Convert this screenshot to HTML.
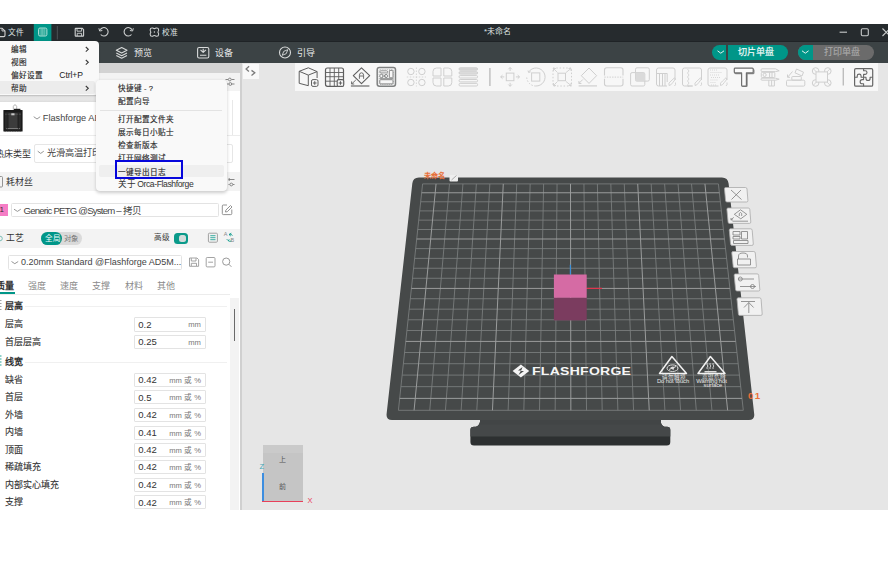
<!DOCTYPE html>
<html lang="zh-CN"><head><meta charset="utf-8">
<style>
*{margin:0;padding:0;box-sizing:border-box}
html,body{width:888px;height:575px;overflow:hidden;background:#fff}
body{position:relative;font-family:"Liberation Sans",sans-serif;color:#333}
.a{position:absolute}
.t{position:absolute;white-space:nowrap;line-height:1}
svg{position:absolute;overflow:visible}
</style></head><body>

<!-- title bar -->
<div class="a" style="left:0;top:24px;width:888px;height:17px;background:#262b2e"></div>
<!-- tab bar -->
<div class="a" style="left:0;top:41px;width:888px;height:22px;background:#3c4345"></div>
<div class="a" style="left:0;top:40.6px;width:888px;height:1.4px;background:#1f2326"></div>
<!-- left panel -->
<div class="a" style="left:0;top:63px;width:240px;height:447px;background:#fff"></div>
<div class="a" style="left:239.5px;top:63px;width:2.5px;height:447px;background:#d0d0d0"></div>
<!-- canvas -->
<div class="a" style="left:242px;top:63px;width:646px;height:447px;background:#e6e6e6"></div>
<!-- toolbar -->
<div class="a" style="left:295px;top:63px;width:583px;height:28px;background:#f7f7f7"></div>
<div class="a" style="left:242.8px;top:64px;width:16px;height:15.3px;background:#f9f9f9"></div>
<svg width="20" height="20" style="left:240px;top:60px" viewBox="0 0 20 20"><path d="M9.1 6.3 L6.1 8.9 L8.9 11.5 M11.5 10.4 L14.8 12.8 L11.5 15.4" fill="none" stroke="#7a7a7a" stroke-width="1.3"/></svg>


<!-- bed -->
<svg width="888" height="575" style="left:0;top:0" viewBox="0 0 888 575">
<path d="M470.4 436 L470.4 430 Q470.4 426.7 474 426.7 L476 426.7 Q480.2 425 480.2 420 L660.5 420 Q660.5 425 664.5 426.7 L667 426.7 Q670.3 426.7 670.3 430 L670.3 442 Q670.3 445.5 666.8 445.5 L474 445.5 Q470.4 445.5 470.4 442 Z" fill="#2d3031"/>
<path d="M470.4 436.4 L470.4 430 Q470.4 426.7 474 426.7 L476 426.7 Q480.2 425 480.2 420 L660.5 420 Q660.5 425 664.5 426.7 L667 426.7 Q670.3 426.7 670.3 430 L670.3 436.4 Z" fill="#454849"/>
<rect x="480" y="419.5" width="181" height="5" fill="#424546"/>
<path d="M418.9 177.6 L721.9 177.6 Q727.9 177.6 728.6 183.6 L754.2 414 Q754.9 420 748.9 420 L392 420 Q386 420 386.6 414 L412.3 183.6 Q412.9 177.6 418.9 177.6 Z" fill="#464949"/>
<path d="M422.60 183.90L398.40 410.30M422.60 183.90L718.40 183.90M449.49 183.90L429.75 410.30M420.69 201.78L720.37 201.78M462.94 183.90L445.43 410.30M419.71 210.90L721.37 210.90M476.38 183.90L461.11 410.30M418.73 220.14L722.39 220.14M489.83 183.90L476.79 410.30M417.73 229.51L723.42 229.51M516.72 183.90L508.14 410.30M415.68 248.61L725.52 248.61M530.16 183.90L523.82 410.30M414.64 258.36L726.59 258.36M543.61 183.90L539.50 410.30M413.58 268.25L727.68 268.25M557.05 183.90L555.17 410.30M412.51 278.27L728.78 278.27M583.95 183.90L586.53 410.30M410.33 298.73L731.03 298.73M597.39 183.90L602.20 410.30M409.21 309.17L732.18 309.17M610.84 183.90L617.88 410.30M408.08 319.77L733.34 319.77M624.28 183.90L633.56 410.30M406.93 330.52L734.53 330.52M651.17 183.90L664.91 410.30M404.58 352.49L736.94 352.49M664.62 183.90L680.59 410.30M403.38 363.71L738.18 363.71M678.06 183.90L696.27 410.30M402.16 375.10L739.43 375.10M691.51 183.90L711.95 410.30M400.93 386.66L740.70 386.66M718.40 183.90L743.30 410.30M398.40 410.30L743.30 410.30" stroke="#7c7f7f" stroke-width="0.85" fill="none"/>
<path d="M436.05 183.90L414.08 410.30M421.65 192.78L719.38 192.78M503.27 183.90L492.46 410.30M416.71 238.99L724.46 238.99M570.50 183.90L570.85 410.30M411.43 288.42L729.90 288.42M637.73 183.90L649.24 410.30M405.76 341.42L735.72 341.42M704.95 183.90L727.62 410.30M399.67 398.39L741.99 398.39" stroke="#9a9c9c" stroke-width="1" fill="none"/>
</svg>


<!-- bed details -->
<div class="t" style="left:423.8px;top:173.3px;font-size:7.1px;color:#e8703a;font-weight:bold">未命名</div>
<svg width="10" height="8" style="left:448.5px;top:173.5px" viewBox="0 0 10 8"><rect x="0.5" y="1" width="8.5" height="6.5" rx="1" fill="#eee"/><path d="M2.5 6 L7.5 1.5" stroke="#999" stroke-width="0.8"/></svg>
<svg width="888" height="575" style="left:0;top:0" viewBox="0 0 888 575">
<!-- logo diamond -->
<path d="M520.9 364.5 L529.2 371 L520.9 377.6 L512.6 371 Z" fill="#f4f4f4"/>
<path d="M522.5 367 L518 370.5 L521 370.5 L518.5 375 L524 371 L521 371 Z" fill="#464949"/>
<!-- warning triangles -->
<path d="M671.9 356.5 L686.5 373.5 L659.5 373.5 Z" fill="none" stroke="#f2f2f2" stroke-width="1.5" stroke-linejoin="round"/>
<ellipse cx="672.5" cy="368.2" rx="5.5" ry="3.3" fill="none" stroke="#e8e8e8" stroke-width="0.9"/>
<path d="M669 369.5 L676 366.5" stroke="#e8e8e8" stroke-width="0.9"/>
<path d="M670 368 Q672 365.5 674.5 367 L673.5 370 Z" fill="#dcdcdc"/>
<path d="M710.4 356.5 L725 373.5 L698 373.5 Z" fill="none" stroke="#f2f2f2" stroke-width="1.5" stroke-linejoin="round"/>
<path d="M707.3 363 q-1 1 0 2 q1 1 0 2 q-1 1 0 2 M710.3 363 q-1 1 0 2 q1 1 0 2 q-1 1 0 2 M713.3 363 q-1 1 0 2 q1 1 0 2 q-1 1 0 2" fill="none" stroke="#e8e8e8" stroke-width="0.8"/>
<rect x="704.5" y="371" width="12" height="1.5" fill="#dcdcdc"/>
<!-- cube -->
<rect x="553.9" y="297.8" width="32.8" height="22.6" fill="#7b3c5f"/>
<rect x="553.9" y="274.5" width="32.8" height="23.3" fill="#d56ba4"/>
<path d="M570.4 264.7 L570.4 274.5" stroke="#3a8fd8" stroke-width="1.2"/>
<path d="M586.7 288.4 L602 288.4" stroke="#e0354d" stroke-width="1.2"/>
</svg>
<div class="t" style="left:532px;top:366px;font-size:10.5px;color:#f6f6f6;font-weight:bold;letter-spacing:0.2px;transform:scaleX(1.335);transform-origin:0 0">FLASHFORGE</div>
<div class="t" style="left:662px;top:375.3px;font-size:5.6px;color:#e6e6e6">请勿触摸</div>
<div class="t" style="left:656.9px;top:379.2px;font-size:5.9px;color:#e6e6e6;letter-spacing:-0.1px">Do not touch</div>
<div class="t" style="left:701.5px;top:375.3px;font-size:5.6px;color:#e6e6e6">高温危险</div>
<div class="t" style="left:696.3px;top:379.2px;font-size:5.9px;color:#e6e6e6;letter-spacing:-0.1px">Warning hot</div>
<div class="t" style="left:703.6px;top:383.3px;font-size:5.9px;color:#e6e6e6;letter-spacing:-0.1px">surface</div>
<div class="t" style="left:748px;top:391px;font-size:9.8px;color:#ee7038;font-weight:bold;letter-spacing:1.4px">01</div>


<!-- plate buttons -->
<svg width="888" height="575" style="left:0;top:0" viewBox="0 0 888 575">
<g fill="#f1f1f1" stroke="#a9a9a9" stroke-width="0.8">
<path d="M725.5 187.5 L745.5 187.5 Q746.8 187.5 747 189 L747.9 200.5 Q748 202 746.5 202 L727 202 Q725.8 202 725.6 200.8 L724.5 189 Q724.4 187.5 725.5 187.5Z"/>
<path d="M727.9 208 L748.3 208 Q749.6 208 749.8 209.5 L750.8 222 Q750.9 223.4 749.4 223.4 L729.5 223.4 Q728.3 223.4 728.1 222.2 L726.9 209.5 Q726.8 208 727.9 208Z"/>
<path d="M730.3 228.8 L750.7 228.8 Q752 228.8 752.2 230.3 L753.3 244 Q753.4 245.4 751.9 245.4 L732 245.4 Q730.8 245.4 730.6 244.2 L729.3 230.3 Q729.2 228.8 730.3 228.8Z"/>
<path d="M732.8 251.5 L753.8 251.5 Q755.1 251.5 755.3 253 L756.4 266.4 Q756.5 267.8 755 267.8 L734.6 267.8 Q733.4 267.8 733.2 266.6 L731.8 253 Q731.7 251.5 732.8 251.5Z"/>
<path d="M735.2 273.9 L757.2 273.9 Q758.5 273.9 758.7 275.4 L759.8 289.6 Q759.9 291 758.4 291 L737 291 Q735.8 291 735.6 289.8 L734.2 275.4 Q734.1 273.9 735.2 273.9Z"/>
<path d="M738.2 297.8 L759.6 297.8 Q760.9 297.8 761.1 299.3 L762.2 314 Q762.3 315.4 760.8 315.4 L739.8 315.4 Q738.6 315.4 738.4 314.2 L737 299.3 Q736.9 297.8 738.2 297.8Z"/>
</g>
<g fill="none" stroke="#7d7d7d" stroke-width="0.8">
<path d="M731 190 L741.5 199.5 M741 190 L731.5 199.5"/>
<path d="M740.5 209.8 L746.8 214.3 L740.8 218.8 L734.3 214.3 Z M739.3 216 v-2.5 q1.2-2 2.4 0 v2.5 M730.8 219.8 l3 -2.4 M731 218 v1.9 h1.9 M732.5 221.2 L748 221.2" />
<path d="M733 231.5 h7 v3.5 h-7z M733 236.5 h7 v2.5 h-7z M741.5 231.5 h6 v7.5 h-6z M733.5 240.5 h14.5 v3 h-14.5z"/>
<path d="M738.5 259 v-3 q0-3 4.5-3 q4.5 0 4.5 3 v1.5 M737.5 259 h13 v6 h-13z"/>
<path d="M738 279 h16 M740 286.5 h16"/>
<circle cx="740.3" cy="279" r="2"/><circle cx="752.5" cy="286.5" r="2"/>
<path d="M741 301.5 h14 M748.8 302.5 v10.5 M744 307.5 l4.8-5 l4.8 5"/>
</g>
</svg>
<!-- gizmo -->
<div class="a" style="left:262.8px;top:444.7px;width:40px;height:57px;background:#c5c5c5"></div>
<div class="a" style="left:262.8px;top:444.7px;width:40px;height:8.5px;background:#cacaca"></div>
<div class="t" style="left:278.5px;top:455.5px;font-size:7px;color:#555">上</div>
<div class="t" style="left:278.5px;top:483px;font-size:7px;color:#555">前</div>
<div class="a" style="left:262px;top:473.2px;width:1.6px;height:29px;background:#3d8ee0"></div>
<div class="a" style="left:262px;top:500.8px;width:41px;height:1.5px;background:#e8405a"></div>
<div class="t" style="left:259.5px;top:462.5px;font-size:7.5px;color:#3fa7b8">Z</div>
<div class="t" style="left:307.5px;top:496.5px;font-size:7.5px;color:#e8405a">X</div>


<!-- toolbar icons -->
<svg width="888" height="575" style="left:0;top:0" viewBox="0 0 888 575">
<g fill="none" stroke="#5e5e5e" stroke-width="1" stroke-linejoin="round">
<path d="M299.2 71.3 L308.3 67.8 L317.1 71.6 L308.3 75.1 Z M299.2 71.3 V83.3 L308.3 85.7 V75.1 M317.1 71.6 V78"/>
<rect x="311.5" y="79.6" width="6.5" height="6.8" rx="1.5"/>
<path d="M314.75 81.2 v3.6 M312.95 83 h3.6"/>
<rect x="325.5" y="68" width="18" height="18.3" rx="2" stroke-width="1.2"/>
<path d="M330 68 V86.3 M334.3 68 V86.3 M338.7 68 V79.5 M325.5 72.5 H343.5 M325.5 76.7 H343.5 M325.5 81.2 H337" stroke-width="0.9"/>
<rect x="337.2" y="79.6" width="6.5" height="6.8" rx="1.5" fill="#f7f7f7" stroke-width="1.1"/>
<path d="M340.45 81.2 v3.6 M338.65 83 h3.6"/>
<path d="M361.5 67.8 L369.7 75.7 L361.5 83.6 L353.3 75.7 Z" stroke-width="1.1"/>
<path d="M359.4 78.8 V75.3 Q359.4 72.8 361.5 72.8 Q363.6 72.8 363.6 75.3 V78.8 M359.4 76 H363.6" stroke-width="0.9"/>
<path d="M355.8 80 L351.8 83.8 M351.6 81.4 V84 H354.2" stroke-width="0.9"/>
<path d="M350.9 86 H369.4" stroke-width="1.1"/>
<rect x="377.2" y="67.6" width="18.3" height="18.7" rx="2.2" stroke="#808282" stroke-width="1.5"/>
<rect x="379.1" y="69.6" width="14.5" height="14.9" rx="1" stroke="#a8aaaa" stroke-width="0.7" stroke-dasharray="1.2 1"/>
<rect x="389.3" y="70.4" width="3.7" height="7.4" rx="0.6" stroke="#7a7c7c" stroke-width="0.9"/>
<rect x="379.8" y="79.7" width="13.2" height="4.2" rx="0.8" stroke="#7a7c7c" stroke-width="0.9"/>
<rect x="379.8" y="70.8" width="7.8" height="2.1" rx="1" stroke="#7a7c7c" stroke-width="0.8"/>
<path d="M379.5 78.6 H393.5" stroke="#8a8c8c" stroke-width="0.9"/>
<circle cx="381.3" cy="76" r="1.6" stroke="#7a7c7c" stroke-width="0.8"/><circle cx="386" cy="76" r="1.6" stroke="#7a7c7c" stroke-width="0.8"/>
<path d="M381.5 73.5 L387.5 78.3 M387.5 73.5 L381.5 78.3" stroke="#8a8c8c" stroke-width="0.7"/>
<path d="M735.6 69.4 H753 Q753.9 69.4 753.9 70.3 V72.8 Q753.9 73.7 753 73.7 H747.1 V85.6 Q747.1 86.5 746.2 86.5 H743.3 Q742.4 86.5 742.4 85.6 V73.7 H736 Q735.1 73.7 735.1 72.8 V70.3 Q735.1 69.4 735.6 69.4 Z" stroke="#8a8a8a" stroke-width="1.2"/>
<path d="M734.8 68.2 H752.3 Q753.2 68.2 753.2 69.1 V72 Q753.2 72.9 752.3 72.9 H746.4 V85.2 Q746.4 86.1 745.5 86.1 H742.5 Q741.6 86.1 741.6 85.2 V72.9 H735.2 Q734.3 72.9 734.3 72 V69.1 Q734.3 68.2 734.8 68.2 Z" stroke="#707070" stroke-width="1.2" fill="#fafafa"/>
<rect x="854.6" y="68.7" width="18.1" height="17.5" rx="1.3" stroke="#666" stroke-width="1.2"/>
<path d="M863.6 68.7 V70.8 H865.2 A1.8 1.8 0 0 1 865.2 74.4 H863.6 V79.6 H862.2 A2.05 2.05 0 0 0 862.2 83.7 H863.6 V86.2 M854.6 77.3 H857.2 V76.1 A1.95 1.95 0 0 1 861.1 76.1 V77.3 H866 V78.5 A2.05 2.05 0 0 0 870.1 78.5 V77.3 H872.7" stroke="#666" stroke-width="1.1"/>
</g>
<g fill="none" stroke="#cfcfcf" stroke-width="1">
<circle cx="410.9" cy="71.5" r="3.2"/><circle cx="421.9" cy="71.5" r="3.2"/><circle cx="410.9" cy="82.5" r="3.2"/><circle cx="421.9" cy="82.5" r="3.2"/>
<path d="M416.4 67.5 V86.5 M406.8 77 H426" stroke-dasharray="1.5 1.5" stroke-width="0.8"/>
<path d="M441 68 H436.5 Q433 68 433 71.5 V76 H441 Z M443.8 68 H448.3 Q451.8 68 451.8 71.5 V76 H443.8 Z M441 86 H436.5 Q433 86 433 82.5 V78 H441 Z M443.8 86 H448.3 Q451.8 86 451.8 82.5 V78 H443.8 Z"/>
<rect x="459" y="67.8" width="18.6" height="2.4" rx="1.2" fill="#d6d6d6"/>
<rect x="459" y="71.7" width="18.6" height="2.4" rx="1.2" fill="#dedede"/>
<rect x="459" y="75.6" width="18.6" height="2.4" rx="1.2"/>
<rect x="459" y="79.5" width="18.6" height="2.4" rx="1.2"/>
<rect x="459" y="83.4" width="18.6" height="2.6" rx="1.2"/>
<rect x="506.3" y="73.1" width="7.6" height="7.6"/>
<path d="M510.1 67.5 V71 M508.3 69.3 L510.1 67.5 L511.9 69.3 M510.1 86.3 V82.8 M508.3 84.5 L510.1 86.3 L511.9 84.5 M500.7 76.9 H504.3 M502.5 75.1 L500.7 76.9 L502.5 78.7 M519.5 76.9 H515.9 M517.7 75.1 L519.5 76.9 L517.7 78.7"/>
<rect x="531.6" y="72.9" width="8.2" height="8.2"/>
<path d="M528.6 72 A9 9 0 1 1 535.7 86 M528 70.5 L528.6 72.5 L530.7 71.8" />
<path d="M535.7 86 A9 9 0 0 1 526.7 77" stroke-dasharray="1.5 1.5"/>
<rect x="558" y="73.2" width="7.5" height="7.5"/>
<path d="M553 68 H571.5 V86 H553 Z" stroke-dasharray="1.5 1.8"/>
<path d="M553.5 68.5 L557.5 72.5 M571 68.5 L566 72.5 M553.5 85.5 L557.5 81.5 M571 85.5 L566 81.5 M553.5 71 V68.5 H556 M571 71 V68.5 H568.5 M553.5 83 V85.5 H556 M571 83 V85.5 H568.5" stroke-width="0.9"/>
<path d="M589 68 L596.6 75.7 L589 83.4 L581.3 75.7 Z"/>
<path d="M582.8 79.5 L579 83.3 M578.9 81 V83.5 H581.4"/>
<path d="M578.6 85.9 H597" stroke-width="1.2"/>
<path d="M604.5 75.5 V70 Q604.5 67.8 606.7 67.8 H620.8 Q623 67.8 623 70 V75.5 M604.5 78.7 V83.8 Q604.5 86 606.7 86 H620.8 Q623 86 623 83.8 V78.7" stroke-width="1.1"/>
<path d="M604.3 77.1 H623.2" stroke-dasharray="1.4 1.2"/>
<rect x="635.5" y="67.8" width="13.8" height="13.3" rx="1.5"/>
<rect x="630.6" y="72.6" width="14.2" height="13.4" rx="1.5"/>
<rect x="635.5" y="72.6" width="9.3" height="8.5" fill="#dadada" stroke="none"/>
<path d="M667 86 H658.5 Q656.5 86 656.5 84 V70 Q656.5 68 658.5 68 H673 Q675 68 675 70 V80 M656.5 73.5 H667.2 V82 M659.5 73.5 V86 M662.5 73.5 V86 M665 73.5 V86" stroke-width="1"/>
<path d="M669 85.5 Q668 83 671 81 L674.5 77.8 L675.5 79 L672.8 82.5 Q671 85.5 669 85.5 Z M675.5 82.5 Q676 85 674.5 86" stroke-width="0.9"/>
<path d="M693 86 H684.5 Q682.5 86 682.5 84 V70 Q682.5 68 684.5 68 H699.5 Q701.5 68 701.5 70 V80" stroke-width="1"/>
<path d="M687.5 69 l1.5 2 l-1.5 2 l1.5 2 l-1.5 2 l1.5 2 l-1.5 2 l1.5 2 l-1.5 2 l1.5 2 M687.5 86 H692" stroke-width="0.8"/>
<path d="M695 85.5 Q694 83 697 81 L700.5 77.8 L701.5 79 L698.8 82.5 Q697 85.5 695 85.5 Z M701.5 82.5 Q702 85 700.5 86" stroke-width="0.9"/>
<path d="M718.5 86 H710 Q708 86 708 84 V70 Q708 68 710 68 H725 Q727 68 727 70 V80" stroke-width="1"/>
<path d="M710 70 h8 M710.5 72.5 h12 M710 75 h9 M711 77.5 h9 M710.5 80 h7 M710.5 82.5 h5 M711 85 h5" stroke-dasharray="0.9 1.1" stroke-width="0.9"/>
<path d="M720.5 85.5 Q719.5 83 722.5 81 L726 77.8 L727 79 L724.3 82.5 Q722.5 85.5 720.5 85.5 Z M727 82.5 Q727.5 85 726 86" stroke-width="0.9"/>
<path d="M762 68.8 H775.5 L779.2 70.8 L775.5 71.6 H762 Q761 71.6 761 70.2 Q761 68.8 762 68.8 Z"/>
<rect x="761.3" y="72.3" width="13.5" height="5.2" rx="1"/>
<circle cx="764.6" cy="74.9" r="1.6"/>
<path d="M769.6 72.3 V77.5 M772 72.3 V77.5"/>
<path d="M762 78.2 H775.5 L779.2 79.2 L775.5 80.2 H762 Q761 80.2 761 79.2 Q761 78.2 762 78.2 Z"/>
<path d="M768.8 80.2 V86 H774.4 V80.2 M771.6 80.2 V86"/>
<rect x="786.5" y="80.2" width="18.3" height="5.9" rx="1.2"/>
<rect x="791.8" y="76.5" width="9.5" height="3.7" rx="0.8"/>
<path d="M796.5 69 L803.5 72.2 L802 76 L795 72.8 Z M792.5 71.5 L787.8 77 M787.5 74.5 V77.3 H790"/>
<circle cx="815.6" cy="71" r="3.3"/><circle cx="827.8" cy="71" r="3.3"/><circle cx="815.6" cy="83" r="3.3"/><circle cx="827.8" cy="83" r="3.3"/>
<path d="M813.5 69 L817.5 73 M829.9 69 L825.9 73 M813.5 85 L817.5 81 M829.9 85 L825.9 81" stroke-width="0.9"/>
<rect x="816" y="71.9" width="11.5" height="10.2" fill="#f7f7f7"/>
</g>
<path d="M489.9 68 V86" stroke="#bdbdbd" stroke-width="1.4"/>
<path d="M843.3 68 V85.5" stroke="#bdbdbd" stroke-width="1.4"/>
</svg>


<!-- title bar content -->
<svg width="888" height="575" style="left:0;top:0" viewBox="0 0 888 575">
<path d="M-3 28.2 H2 L5 31 V35.3 Q5 36.6 3.7 36.6 H-3" fill="none" stroke="#d0d0d0" stroke-width="1.1"/>
<path d="M2 28.2 V31 H5" fill="none" stroke="#d0d0d0" stroke-width="0.9"/>
<rect x="33.8" y="24" width="17.6" height="17" fill="#009688"/>
<rect x="38.5" y="28" width="8.4" height="8" rx="1.5" fill="#2aa898" stroke="#a6ddd5" stroke-width="1"/>
<path d="M41.2 28.5 V35.5 M42.7 28.5 V35.5 M44.2 28.5 V35.5" stroke="#7fcfc3" stroke-width="0.7"/>
<path d="M57.4 26 V39.5" stroke="#444b4e" stroke-width="1.2"/>
<g fill="none" stroke="#cfd2d2" stroke-width="1.1">
<path d="M75.8 28.4 H82.3 L83.6 29.7 V35.4 Q83.6 36.1 82.9 36.1 H75.8 Q75.2 36.1 75.2 35.4 V29.1 Q75.2 28.4 75.8 28.4 Z"/>
<path d="M77 28.6 V31.2 H81.6 V28.6 M77.2 36 V33.3 H81.6 V36" stroke-width="0.9"/>
<path d="M100.2 29.8 A4.2 4.2 0 1 1 100.7 34.5"/>
<path d="M98.9 28.3 L99.6 31 L102.3 30.5" stroke-width="1"/>
<path d="M132 29.8 A4.2 4.2 0 1 0 131.5 34.5"/>
<path d="M133.3 28.3 L132.6 31 L129.9 30.5" stroke-width="1"/>
<path d="M152 27.9 H152.8 Q154.4 29.3 156 27.9 H156.8 Q158.6 27.9 158.6 29.7 V30.5 Q157.2 32 158.6 33.6 V34.4 Q158.6 36.2 156.8 36.2 H156 Q154.4 34.8 152.8 36.2 H152 Q150.2 36.2 150.2 34.4 V33.6 Q151.6 32 150.2 30.5 V29.7 Q150.2 27.9 152 27.9 Z" stroke-width="1.05"/>
<circle cx="154.4" cy="32" r="0.7" fill="#cfd2d2" stroke="none"/>
</g>
<path d="M839.6 32.2 H847" stroke="#c8cbcb" stroke-width="1.1"/>
<rect x="861.3" y="28.7" width="7" height="7" rx="1.2" fill="none" stroke="#c8cbcb" stroke-width="1.1"/>
<path d="M882.5 28.5 L890 36 M890 28.5 L882.5 36" stroke="#c8cbcb" stroke-width="1.1"/>
</svg>
<div class="t" style="left:7.8px;top:28.9px;font-size:7.7px;color:#dfe2e2">文件</div>
<div class="t" style="left:161.6px;top:28.9px;font-size:7.7px;color:#dfe2e2">校准</div>
<div class="t" style="left:484px;top:28.2px;font-size:7.9px;color:#dfe2e2">*未命名</div>
<!-- tab bar content -->
<svg width="888" height="575" style="left:0;top:0" viewBox="0 0 888 575">
<g fill="none" stroke="#d8dada" stroke-width="1.1" stroke-linejoin="round">
<path d="M121.7 47.5 L127 50.3 L121.7 53.1 L116.3 50.3 Z"/>
<path d="M116.3 53 L121.7 55.8 L127 53 M116.3 55.6 L121.7 58.3 L127 55.6"/>
<rect x="197.6" y="47.5" width="11.2" height="10.5" rx="1.5"/>
<path d="M200.5 49.8 L203.2 52.4 L205.9 49.8 M203.2 48.8 V52 M200 55.3 H206.4"/>
<circle cx="285" cy="52.5" r="5.5"/>
<path d="M282.2 55.3 L283.8 51.3 L287.8 49.7 L286.2 53.7 Z" stroke-width="0.9"/>
</g>
</svg>
<div class="t" style="left:133.6px;top:49px;font-size:9px;color:#e8eaea">预览</div>
<div class="t" style="left:214.8px;top:49px;font-size:9px;color:#e8eaea">设备</div>
<div class="t" style="left:296.8px;top:49px;font-size:9px;color:#e8eaea">引导</div>
<!-- slice buttons -->
<div class="a" style="left:711.6px;top:44.9px;width:76.5px;height:15.3px;border-radius:7.7px;background:#009688"></div>
<div class="a" style="left:726.3px;top:44.9px;width:1.8px;height:15.3px;background:#3c4345"></div>
<div class="a" style="left:797.6px;top:44.9px;width:76.5px;height:15.3px;border-radius:7.7px;background:#6b6b6b;overflow:hidden"><div class="a" style="left:0;top:0;width:15.7px;height:15.3px;background:#009688"></div></div>
<svg width="888" height="575" style="left:0;top:0" viewBox="0 0 888 575">
<path d="M717.5 50.8 L720.8 53.2 L724 50.8 M802 50.8 L805.3 53.2 L808.6 50.8" fill="none" stroke="#e6f4f2" stroke-width="1"/>
</svg>
<div class="t" style="left:737.8px;top:47.8px;font-size:9px;color:#f4fbfa;-webkit-text-stroke:0.2px #f4fbfa">切片单盘</div>
<div class="t" style="left:823.8px;top:47.8px;font-size:9px;color:#a8a8a8;-webkit-text-stroke:0.15px #a8a8a8">打印单盘</div>


<!-- left panel -->
<div class="a" style="left:0;top:63px;width:239.5px;height:10px;background:#d3d3d3"></div>
<div class="a" style="left:0;top:73px;width:239.5px;height:18px;background:#f3f3f3"></div>
<div class="a" style="left:0;top:135px;width:239.5px;height:1px;background:#ececec"></div>
<div class="a" style="left:231.8px;top:100.4px;width:1px;height:35px;background:#e8e8e8"></div>
<div class="a" style="left:34.4px;top:143.5px;width:198.4px;height:19px;border:1px solid #e6e6e6;border-radius:2px"></div>
<div class="a" style="left:0;top:172.3px;width:239.5px;height:19.2px;background:#f3f3f3"></div>
<div class="a" style="left:0;top:203.8px;width:7.9px;height:12.4px;background:#f57dc5"></div>
<div class="a" style="left:11.3px;top:203.2px;width:207.8px;height:14.2px;border:1px solid #e3e3e3;border-radius:1.5px"></div>
<div class="a" style="left:0;top:229px;width:239.5px;height:18.7px;background:#f3f3f3"></div>
<div class="a" style="left:41.1px;top:232px;width:40.5px;height:12.7px;border-radius:6.4px;background:#dadada"></div>
<div class="a" style="left:41.1px;top:232px;width:20.8px;height:12.7px;border-radius:6.4px;background:#009688"></div>
<div class="a" style="left:173.6px;top:233.4px;width:14.6px;height:10.2px;border-radius:3.5px;background:#0a9a8a"></div>
<div class="a" style="left:178.9px;top:234.8px;width:7.5px;height:7.5px;border-radius:2.5px;background:#d3dcdb"></div>
<div class="a" style="left:8.4px;top:255.1px;width:174.1px;height:14.6px;border:1px solid #e3e3e3;border-radius:1.5px"></div>
<div class="a" style="left:0;top:294px;width:229.6px;height:1px;background:#ececec"></div>
<div class="a" style="left:0;top:292px;width:15.1px;height:2px;background:#009688"></div>
<div class="a" style="left:229.6px;top:298px;width:9.9px;height:212px;background:#f3f3f3"></div>
<div class="a" style="left:233.6px;top:308.7px;width:1.6px;height:32.2px;background:#6a6a6a"></div>
<div class="a" style="left:25px;top:306px;width:202px;height:1px;background:#f0f0f0"></div>
<div class="a" style="left:25px;top:361.5px;width:202px;height:1px;background:#f0f0f0"></div>
<svg width="888" height="575" style="left:0;top:0" viewBox="0 0 888 575">
<g fill="none" stroke="#7c7c7c" stroke-width="0.9">
<path d="M225.5 79.5 H228 M231.5 79.5 H234.5 M225.5 84 H228.5 M232 84 H234.5"/>
<circle cx="229.8" cy="79.5" r="1.4"/><circle cx="230.3" cy="84" r="1.4"/>
<path d="M228.5 179.5 H234.5 M228.5 184.5 H229.5 M233 184.5 H234.5 M229.2 178 v3"/>
<circle cx="231.3" cy="184.5" r="1.4"/>
<path d="M37.7 151.2 L40.7 153.4 L43.8 151.2 M33.7 116.7 L37 119 L40.2 116.7 M14 209.2 L17.4 211.4 L20.8 209.2 M11.5 261.5 L14.8 263.7 L18.2 261.5" stroke="#8a8a8a"/>
<path d="M222.3 206 Q222.3 205 223.3 205 H227 M231.8 209.5 V213.6 Q231.8 214.6 230.8 214.6 H223.3 Q222.3 214.6 222.3 213.6 V206" stroke="#888"/>
<path d="M225.5 212 L225.8 210.2 L230.5 205.5 L232 207 L227.3 211.7 Z" stroke="#888"/>
<rect x="208.4" y="233.2" width="9" height="9" rx="1" stroke="#a0a0a0" stroke-width="1"/>
<path d="M210.3 235.7 h5.2 M210.3 237.7 h5.2 M210.3 239.7 h5.2" stroke="#0a9a8a" stroke-width="0.8"/>
<path d="M229 234.5 Q231 233.5 232.5 235.5 M231.3 233.2 L229 234.5 L230.8 236 M228 240.5 Q229.5 242 231.5 241 M226.8 239.2 l1.2 1.3 l1.5 -0.8" stroke="#0a9a8a" stroke-width="0.9"/>
<path d="M189.5 258 H197 L198.6 259.6 V266.3 H189.5 Z M191.3 258.2 V261 H196 V258.2 M191.3 266 V263.3 H196.5 V266" stroke="#999"/>
<rect x="206.2" y="257.5" width="8.8" height="9.4" rx="1" stroke="#999"/>
<path d="M208.2 262.2 H213" stroke="#999"/>
<circle cx="226.2" cy="261.6" r="3.6" stroke="#999" stroke-width="1"/>
<path d="M228.8 264.2 L231.4 266.8" stroke="#999" stroke-width="1"/>
<circle cx="0" cy="238.5" r="2.3" fill="none" stroke="#6fb8b0" stroke-width="0.9"/>
<path d="M-1 176.5 H1.5 Q2.5 176.5 2.5 177.5 V186 Q2.5 187 1.5 187 H-1" stroke="#888"/>
<path d="M-1 300.5 H1.5 M-1 303.5 H1.5 M-1 306.5 H1.5 M-1 309.5 H1.5" stroke="#999"/>
<path d="M-1 356 H1.5 M-1 359 H1.5 M-1 362 H1.5 M-1 365 H1.5" stroke="#0a9a8a"/>
</g>
<g>
<rect x="3.4" y="110" width="19.2" height="21.6" rx="0.6" fill="#1a1a1a"/>
<rect x="5.2" y="112.3" width="15.6" height="17" fill="#2e2e2e"/>
<rect x="9" y="113" width="8" height="15.5" fill="#3c3c3c"/>
<path d="M5.2 114.2 H20.8" stroke="#5a5a5a" stroke-width="0.8"/>
<rect x="11.3" y="113.3" width="3.2" height="2" fill="#c8c8c8"/>
<path d="M6 128.6 H20" stroke="#8a8a8a" stroke-width="0.9"/>
<path d="M7.2 113 V129 M18.6 113 V129" stroke="#1f1f1f" stroke-width="0.8"/>
<path d="M13.3 109.5 V106.5 Q15 102.8 16.7 106.5 V109.5" stroke="#9a9a9a" fill="none" stroke-width="0.7"/>
<rect x="13.8" y="108.8" width="6.6" height="3.4" fill="#1a1a1a"/>
<path d="M4.5 131.3 H21.5" stroke="#555" stroke-width="0.6" stroke-dasharray="1.5 1"/>
</g>
</svg>
<div class="t" style="left:42.8px;top:113.5px;font-size:9.2px;color:#454545">Flashforge AD5M (0.4 nozzle)</div>
<div class="t" style="left:-5px;top:149.6px;font-size:9px;color:#333">热床类型</div>
<div class="t" style="left:46.8px;top:149.2px;font-size:9.2px;color:#444">光滑高温打印板</div>
<div class="t" style="left:6.2px;top:178.2px;font-size:8.9px;color:#333">耗材丝</div>
<div class="t" style="left:-0.5px;top:205.8px;font-size:8px;color:#333">1</div>
<div class="t" style="left:23.6px;top:205.6px;font-size:9.6px;color:#444;letter-spacing:-0.8px">Generic PETG @System – 拷贝</div>
<div class="t" style="left:6.2px;top:234px;font-size:8.8px;color:#333">工艺</div>
<div class="t" style="left:44.5px;top:234.7px;font-size:7.6px;color:#f4fbfa">全局</div>
<div class="t" style="left:63.6px;top:234.7px;font-size:7.4px;color:#777">对象</div>
<div class="t" style="left:154.4px;top:233.9px;font-size:7.6px;color:#3a3a3a">高级</div>
<div class="t" style="left:223.8px;top:232.3px;font-size:5.5px;color:#888">A</div>
<div class="t" style="left:230.5px;top:237.6px;font-size:5.5px;color:#888">B</div>
<div class="t" style="left:21px;top:258px;font-size:9px;color:#444">0.20mm Standard @Flashforge AD5M...</div>
<div class="t" style="left:-4px;top:282px;font-size:9px;color:#333;font-weight:bold">质量</div>
<div class="t" style="left:28.4px;top:282px;font-size:9px;color:#8a8a8a">强度</div>
<div class="t" style="left:60.1px;top:282px;font-size:9px;color:#8a8a8a">速度</div>
<div class="t" style="left:91.9px;top:282px;font-size:9px;color:#8a8a8a">支撑</div>
<div class="t" style="left:124.5px;top:282px;font-size:9px;color:#8a8a8a">材料</div>
<div class="t" style="left:157.2px;top:282px;font-size:9px;color:#8a8a8a">其他</div>
<div class="t" style="left:4.7px;top:301.8px;font-size:9px;color:#333;font-weight:bold">层高</div>
<div class="t" style="left:4.7px;top:357.5px;font-size:9px;color:#333;font-weight:bold">线宽</div>
<div class="t" style="left:4.6px;top:320.1px;font-size:9px;color:#333;-webkit-text-stroke:0.12px #333">层高</div>
<div class="a" style="left:134.3px;top:317.4px;width:72.1px;height:14.4px;border:1px solid #e3e3e3;border-radius:1px;background:#fff"></div>
<div class="t" style="left:138.3px;top:319.8px;font-size:9.5px;color:#333">0.2</div>
<div class="t" style="right:687.1px;top:321.4px;font-size:7.6px;color:#777">mm</div>
<div class="t" style="left:4.6px;top:337.5px;font-size:9px;color:#333;-webkit-text-stroke:0.12px #333">首层层高</div>
<div class="a" style="left:134.3px;top:334.8px;width:72.1px;height:14.4px;border:1px solid #e3e3e3;border-radius:1px;background:#fff"></div>
<div class="t" style="left:138.3px;top:337.2px;font-size:9.5px;color:#333">0.25</div>
<div class="t" style="right:687.1px;top:338.8px;font-size:7.6px;color:#777">mm</div>
<div class="t" style="left:4.6px;top:375.7px;font-size:9px;color:#333;-webkit-text-stroke:0.12px #333">缺省</div>
<div class="a" style="left:134.3px;top:373.0px;width:72.1px;height:14.4px;border:1px solid #e3e3e3;border-radius:1px;background:#fff"></div>
<div class="t" style="left:138.3px;top:375.4px;font-size:9.5px;color:#333">0.42</div>
<div class="t" style="right:687.1px;top:377.0px;font-size:7.6px;color:#777">mm 或 %</div>
<div class="t" style="left:4.6px;top:392.8px;font-size:9px;color:#333;-webkit-text-stroke:0.12px #333">首层</div>
<div class="a" style="left:134.3px;top:390.1px;width:72.1px;height:14.4px;border:1px solid #e3e3e3;border-radius:1px;background:#fff"></div>
<div class="t" style="left:138.3px;top:392.5px;font-size:9.5px;color:#333">0.5</div>
<div class="t" style="right:687.1px;top:394.1px;font-size:7.6px;color:#777">mm 或 %</div>
<div class="t" style="left:4.6px;top:410.5px;font-size:9px;color:#333;-webkit-text-stroke:0.12px #333">外墙</div>
<div class="a" style="left:134.3px;top:407.8px;width:72.1px;height:14.4px;border:1px solid #e3e3e3;border-radius:1px;background:#fff"></div>
<div class="t" style="left:138.3px;top:410.2px;font-size:9.5px;color:#333">0.42</div>
<div class="t" style="right:687.1px;top:411.8px;font-size:7.6px;color:#777">mm 或 %</div>
<div class="t" style="left:4.6px;top:428.3px;font-size:9px;color:#333;-webkit-text-stroke:0.12px #333">内墙</div>
<div class="a" style="left:134.3px;top:425.6px;width:72.1px;height:14.4px;border:1px solid #e3e3e3;border-radius:1px;background:#fff"></div>
<div class="t" style="left:138.3px;top:428.0px;font-size:9.5px;color:#333">0.41</div>
<div class="t" style="right:687.1px;top:429.6px;font-size:7.6px;color:#777">mm 或 %</div>
<div class="t" style="left:4.6px;top:445.6px;font-size:9px;color:#333;-webkit-text-stroke:0.12px #333">顶面</div>
<div class="a" style="left:134.3px;top:442.9px;width:72.1px;height:14.4px;border:1px solid #e3e3e3;border-radius:1px;background:#fff"></div>
<div class="t" style="left:138.3px;top:445.3px;font-size:9.5px;color:#333">0.42</div>
<div class="t" style="right:687.1px;top:446.9px;font-size:7.6px;color:#777">mm 或 %</div>
<div class="t" style="left:4.6px;top:462.7px;font-size:9px;color:#333;-webkit-text-stroke:0.12px #333">稀疏填充</div>
<div class="a" style="left:134.3px;top:460.0px;width:72.1px;height:14.4px;border:1px solid #e3e3e3;border-radius:1px;background:#fff"></div>
<div class="t" style="left:138.3px;top:462.4px;font-size:9.5px;color:#333">0.42</div>
<div class="t" style="right:687.1px;top:464.0px;font-size:7.6px;color:#777">mm 或 %</div>
<div class="t" style="left:4.6px;top:480.5px;font-size:9px;color:#333;-webkit-text-stroke:0.12px #333">内部实心填充</div>
<div class="a" style="left:134.3px;top:477.8px;width:72.1px;height:14.4px;border:1px solid #e3e3e3;border-radius:1px;background:#fff"></div>
<div class="t" style="left:138.3px;top:480.2px;font-size:9.5px;color:#333">0.42</div>
<div class="t" style="right:687.1px;top:481.8px;font-size:7.6px;color:#777">mm 或 %</div>
<div class="t" style="left:4.6px;top:497.8px;font-size:9px;color:#333;-webkit-text-stroke:0.12px #333">支撑</div>
<div class="a" style="left:134.3px;top:495.1px;width:72.1px;height:14.4px;border:1px solid #e3e3e3;border-radius:1px;background:#fff"></div>
<div class="t" style="left:138.3px;top:497.5px;font-size:9.5px;color:#333">0.42</div>
<div class="t" style="right:687.1px;top:499.1px;font-size:7.6px;color:#777">mm 或 %</div>



<!-- main menu -->
<div class="a" style="left:0;top:95.2px;width:96px;height:6.6px;background:linear-gradient(#dedede,#e6e6e6 30%,#e6e6e6 70%,#dcdcdc)"></div>
<div class="a" style="left:-6px;top:41px;width:104.5px;height:54.2px;background:#f9f9f9;border-radius:0 4px 4px 4px;box-shadow:0 0.5px 1.5px rgba(0,0,0,0.15)"></div>
<div class="a" style="left:0;top:80.7px;width:95.4px;height:13.7px;background:#ececec;border-radius:0 2px 2px 0"></div>
<div class="t" style="left:10.5px;top:46.3px;font-size:7.6px;color:#2a2a2a;-webkit-text-stroke:0.15px #2a2a2a">编辑</div>
<div class="t" style="left:10.5px;top:59.3px;font-size:7.6px;color:#2a2a2a;-webkit-text-stroke:0.15px #2a2a2a">视图</div>
<div class="t" style="left:10.5px;top:72.3px;font-size:7.6px;color:#2a2a2a;-webkit-text-stroke:0.15px #2a2a2a">偏好设置</div>
<div class="t" style="left:10.5px;top:85.3px;font-size:7.6px;color:#2a2a2a;-webkit-text-stroke:0.15px #2a2a2a">帮助</div>
<div class="t" style="left:59.3px;top:71.3px;font-size:8.6px;color:#222;letter-spacing:-0.1px">Ctrl+P</div>
<svg width="888" height="575" style="left:0;top:0" viewBox="0 0 888 575">
<path d="M85.8 47 L88.3 49.3 L85.8 51.6 M85.8 60 L88.3 62.3 L85.8 64.6 M85.8 86 L88.3 88.3 L85.8 90.6" fill="none" stroke="#3a3a3a" stroke-width="1.1"/>
</svg>
<!-- submenu -->
<div class="a" style="left:95.5px;top:80px;width:131.5px;height:110.5px;background:#f9f9f9;border-radius:4px;box-shadow:0 1.5px 3.5px rgba(0,0,0,0.2)"></div>
<div class="a" style="left:100px;top:109.5px;width:122px;height:1px;background:#e3e3e3"></div>
<div class="a" style="left:98.9px;top:164.9px;width:125.5px;height:12.5px;background:#efefef;border-radius:2px"></div>
<div class="t" style="left:118px;top:85.2px;font-size:7.6px;color:#2a2a2a;-webkit-text-stroke:0.15px #2a2a2a">快捷键 - ?</div>
<div class="t" style="left:118px;top:97.7px;font-size:7.6px;color:#2a2a2a;-webkit-text-stroke:0.15px #2a2a2a">配置向导</div>
<div class="t" style="left:118px;top:116.2px;font-size:7.6px;color:#2a2a2a;-webkit-text-stroke:0.15px #2a2a2a">打开配置文件夹</div>
<div class="t" style="left:118px;top:129.2px;font-size:7.6px;color:#2a2a2a;-webkit-text-stroke:0.15px #2a2a2a">展示每日小贴士</div>
<div class="t" style="left:118px;top:142.2px;font-size:7.6px;color:#2a2a2a;-webkit-text-stroke:0.15px #2a2a2a">检查新版本</div>
<div class="a" style="left:118px;top:150px;width:60px;height:10px;overflow:hidden"><div class="t" style="left:0;top:4.8px;font-size:7.6px;color:#2a2a2a;-webkit-text-stroke:0.15px #2a2a2a">打开网络测试</div></div>
<div class="t" style="left:118px;top:169px;font-size:7.6px;color:#2a2a2a;-webkit-text-stroke:0.15px #2a2a2a">一键导出日志</div>
<div class="t" style="left:118px;top:180.3px;font-size:8.6px;color:#333;letter-spacing:-0.4px">关于 Orca-Flashforge</div>
<div class="a" style="left:114.9px;top:159.9px;width:68.1px;height:19px;border:2.2px solid #0606dc"></div>

<!--CONTENT-->

</body></html>
